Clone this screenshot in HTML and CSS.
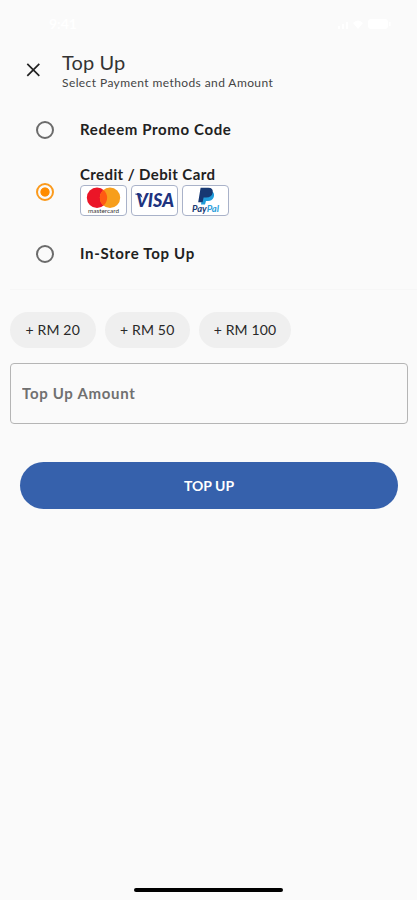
FILE: index.html
```
<!DOCTYPE html>
<html lang="en">
<head>
  <meta charset="utf-8">
  <meta name="viewport" content="width=device-width, initial-scale=1">
  <title>Top Up</title>
  <link rel="stylesheet" href="styles.css">
</head>
<body>
  <div class="status-bar">
    <span class="time">9:41</span>
    <svg class="status-icons" width="54" height="12" viewBox="0 0 54 12">
      <path d="M1 8h2v3H1zM5 6h2v5H5zM9 4h2v7H9zM16 5q5-5 10 0l-5 6z"/>
      <rect x="31" y="1" width="20" height="10" rx="3"/>
      <rect x="52" y="4" width="1.5" height="4"/>
    </svg>
  </div>

  <header class="header">
    <button class="close-btn" aria-label="Close">
      <svg width="16" height="16" viewBox="0 0 16 16">
        <path d="M2.3 1.8l12 12M14.3 1.8L2.3 13.8"/>
      </svg>
    </button>
    <div>
      <h1 class="title">Top Up</h1>
      <p class="subtitle">Select Payment methods and Amount</p>
    </div>
  </header>

  <div class="methods">
    <label class="method">
      <input type="radio" name="method" class="radio">
      <span class="method-name promo">Redeem Promo Code</span>
    </label>
    <label class="method">
      <input type="radio" name="method" class="radio" checked>
      <span class="method-body">
        <span class="method-name">Credit / Debit Card</span>
        <span class="brands">
          <svg class="brand" viewBox="0 0 45 29">
            <circle cx="16" cy="11.7" r="10.2" fill="#eb1527"/>
            <circle cx="29" cy="11.7" r="10.2" fill="#f79e1b"/>
            <path d="M22.5 3.9a10.2 10.2 0 0 1 0 15.6a10.2 10.2 0 0 1 0-15.6z" fill="#ff5a12"/>
            <text x="22.5" y="27" class="mc-text" textLength="31" lengthAdjust="spacingAndGlyphs">mastercard</text>
          </svg>
          <svg class="brand" viewBox="0 0 45 29">
            <text x="23" y="20.5" class="visa-text" textLength="38" lengthAdjust="spacingAndGlyphs">VISA</text>
            <path d="M3 7.7h6l1.5 4q-3-2.8-7.5-3.5z" fill="#20337f"/>
          </svg>
          <svg class="brand" viewBox="0 0 45 29">
            <path d="M20 5h8q4 1 2.8 6-1.5 4-5.8 4h-2l-1 3.5h-4z" fill="#219ddb"/>
            <path d="M17.6 1.7h7.8q5 0 4.3 5-1 4.8-6.5 4.8h-2.6l-1 4.8h-4.4z" fill="#173872"/>
            <text y="25.5" class="pp-text" x="9" textLength="27" lengthAdjust="spacingAndGlyphs">Pay<tspan fill="#2c9edb">Pal</tspan></text>
          </svg>
        </span>
      </span>
    </label>
    <label class="method">
      <input type="radio" name="method" class="radio">
      <span class="method-name store">In-Store Top Up</span>
    </label>
  </div>

  <div class="chips">
    <button class="chip">+ RM 20</button>
    <button class="chip">+ RM 50</button>
    <button class="chip chip-wide">+ RM 100</button>
  </div>

  <input type="text" class="amount-input" placeholder="Top Up Amount">

  <button class="submit-btn">TOP UP</button>

  <div class="home-indicator"></div>
</body>
</html>
```
FILE: styles.css
```
* {
  box-sizing: border-box;
}

body {
  margin: 0;
  height: 900px;
  display: flex;
  flex-direction: column;
  background: #fafafa;
  color: #212121;
  font-family: Lato, "Open Sans", sans-serif;
}

button,
input {
  font-family: inherit;
}

.status-bar {
  height: 50px;
  padding: 16px 26px 0 49px;
  display: flex;
  justify-content: space-between;
  color: #fff;
}

.time {
  font-size: 14px;
  font-weight: 700;
  line-height: 16px;
}

.status-icons {
  margin-top: 2px;
  fill: #fff;
}

.header {
  height: 49px;
  display: flex;
  align-items: flex-start;
}

.close-btn {
  width: 62px;
  height: 16px;
  margin-top: 12px;
  padding: 0 0 0 25px;
  display: flex;
  border: none;
  background: none;
  cursor: pointer;
}

.close-btn svg {
  flex-shrink: 0;
  fill: none;
  stroke: #222;
  stroke-width: 1.7;
}

.title {
  margin: 0;
  color: #333;
  font-size: 20px;
  font-weight: 400;
  line-height: 25px;
  letter-spacing: 0.1px;
}

.subtitle {
  margin: 0;
  color: #444;
  font-size: 12px;
  line-height: 15px;
  letter-spacing: 0.41px;
}

.methods {
  height: 191px;
  display: flex;
  flex-direction: column;
  margin-left: 10px;
  border-bottom: 1px solid #f6f6f6;
}

.method {
  height: 62px;
  padding-left: 26px;
  display: flex;
  align-items: center;
  cursor: pointer;
}

.radio {
  appearance: none;
  flex-shrink: 0;
  width: 18px;
  height: 18px;
  margin: 0 26px 0 0;
  border: 2px solid #6b6b6b;
  border-radius: 50%;
}

.radio:checked {
  border-color: #fb9a1c;
  background: radial-gradient(circle, #ff8c00 4.2px, transparent 5px);
}

.method-body {
  display: flex;
  flex-direction: column;
  gap: 1px;
  margin-bottom: 3px;
}

.method-name {
  font-size: 15px;
  font-weight: 700;
  line-height: 19px;
  letter-spacing: 0.4px;
}

.promo,
.store {
  padding-bottom: 2px;
  letter-spacing: 0.63px;
}

.store {
  letter-spacing: 0.7px;
}

.brands {
  display: flex;
  gap: 4px;
}

.brand {
  width: 47px;
  height: 31px;
  border: 1px solid #a9b2c9;
  border-radius: 4px;
  background: #fff;
}

.mc-text {
  fill: #333;
  font-size: 6px;
  text-anchor: middle;
}

.visa-text {
  fill: #20337f;
  font-size: 18px;
  font-weight: 900;
  font-style: italic;
  text-anchor: middle;
}

.pp-text {
  fill: #173872;
  font-size: 8.5px;
  font-weight: 700;
  font-style: italic;
}

.chips {
  display: flex;
  gap: 9px;
  padding: 22px 10px 15px;
}

.chip {
  width: 85.5px;
  height: 36px;
  padding: 0 0 2px;
  border: none;
  border-radius: 18px;
  background: #efefef;
  color: #292929;
  font-size: 14px;
  letter-spacing: 0.15px;
  cursor: pointer;
}

.chip-wide {
  width: 92px;
}

.amount-input {
  height: 61px;
  margin: 0 9px 0 10px;
  padding: 0 11px 2px;
  border: 1px solid #b5b5b5;
  border-radius: 4px;
  background: transparent;
  font-size: 15px;
  font-weight: 700;
  letter-spacing: 0.7px;
}

.amount-input::placeholder {
  color: #707070;
}

.submit-btn {
  height: 47px;
  margin: 38px 19px 0 20px;
  padding-bottom: 2px;
  border: none;
  border-radius: 24px;
  background: #3661ac;
  color: #fff;
  font-size: 14px;
  font-weight: 700;
  cursor: pointer;
}

.home-indicator {
  width: 149px;
  height: 4px;
  margin: auto auto 8px;
  border-radius: 2px;
  background: #000;
}
```
